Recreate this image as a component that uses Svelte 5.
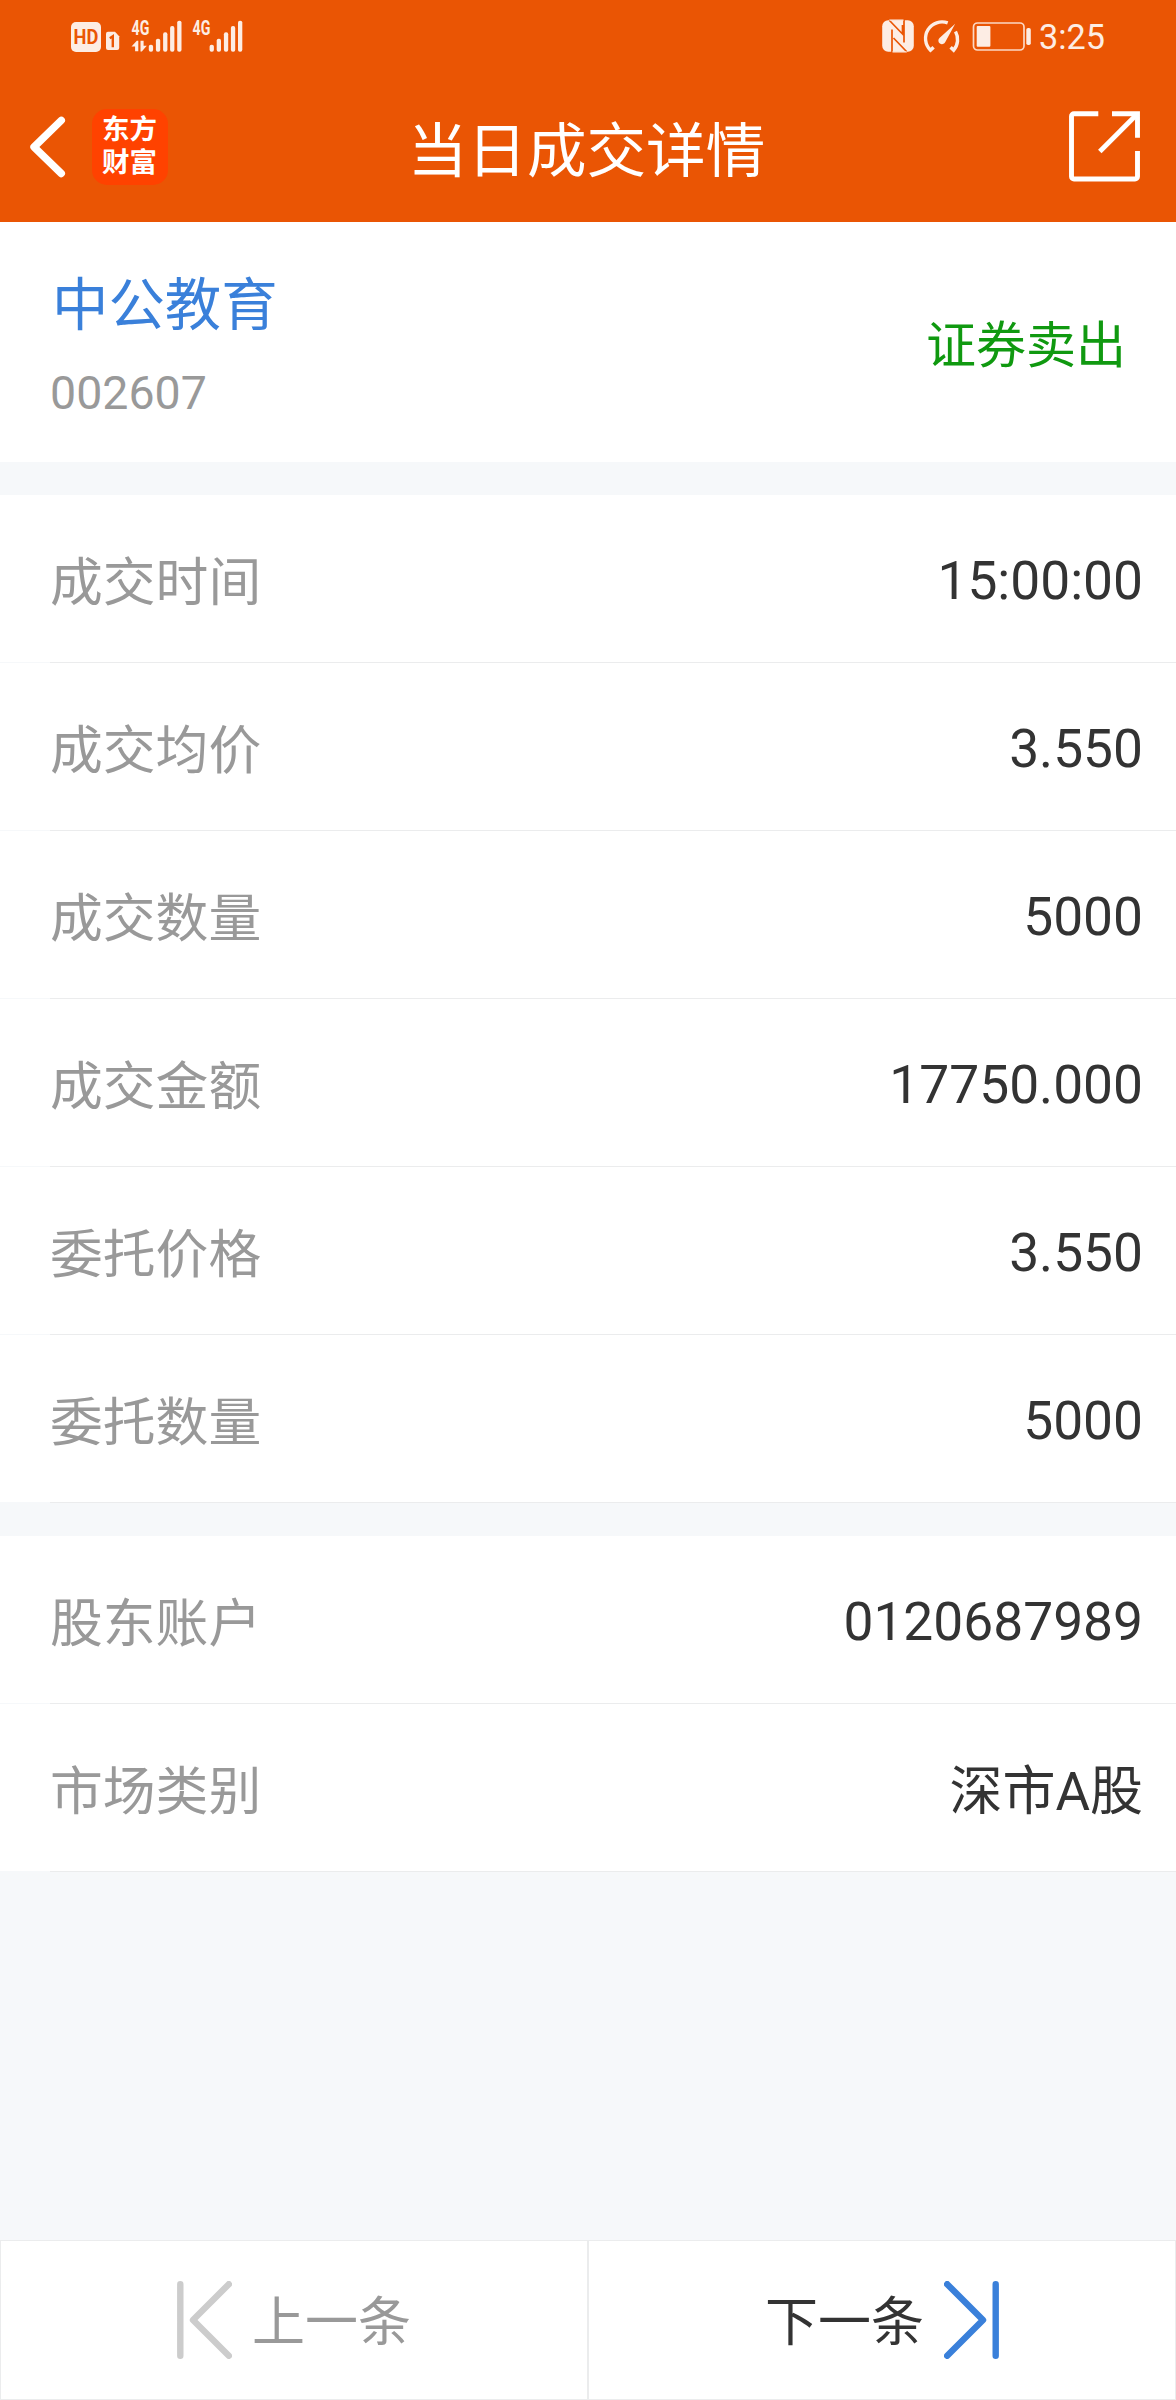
<script lang="ts">
	type Row = { label: string; value: string };

	const stock = { name: "中公教育", code: "002607", side: "证券卖出" };

	const groups: Row[][] = [
		[
			{ label: "成交时间", value: "15:00:00" },
			{ label: "成交均价", value: "3.550" },
			{ label: "成交数量", value: "5000" },
			{ label: "成交金额", value: "17750.000" },
			{ label: "委托价格", value: "3.550" },
			{ label: "委托数量", value: "5000" }
		],
		[
			{ label: "股东账户", value: "0120687989" },
			{ label: "市场类别", value: "深市A股" }
		]
	];

	// Signal bars: x offset and top edge, all share the same bottom
	const bars = [
		{ x: 0, y: 44.8 },
		{ x: 7.1, y: 38.7 },
		{ x: 14.3, y: 32.3 },
		{ x: 21.3, y: 26 },
		{ x: 28.4, y: 20.7 }
	];

	// Values with Chinese text sit a little lower than plain numbers
	const isNumeric = (text: string) => /^[\d.:]+$/.test(text);
</script>

<div class="page">
	<header class="top">
		<div class="status">
			<svg class="signals" width="172" height="72" viewBox="71 0 172 72">
				<rect x="71" y="22" width="30" height="30" rx="5" fill="#fdede4" />
				<text x="73.6" y="43.6" class="hd" textLength="24.8" lengthAdjust="spacingAndGlyphs">HD</text>
				<path d="M108 31.7h7l4.2 4.6v11.7a2 2 0 0 1-2 2h-9.2a2 2 0 0 1-2-2v-14.3a2 2 0 0 1 2-2z" fill="#fdede4" />
				<path d="M109.8 38.2l3-1.9v11" fill="none" stroke="#ea5504" stroke-width="2.4" />
				<text x="131.5" y="34.6" class="net" textLength="17.8" lengthAdjust="spacingAndGlyphs">4G</text>
				<text x="192.5" y="34.6" class="net" textLength="17.8" lengthAdjust="spacingAndGlyphs">4G</text>
				<path d="M138.3 51.3v-10.6h-1.5l-5.3 5.8h3.6v4.8zM140.5 40.7v10.8h1.3l5-5.800h-3.200v-5z" fill="#fdede4" />
				{#each [148.8, 209.6] as start}
					{#each bars as bar}
						<rect x={start + bar.x} y={bar.y} width="4.3" height={51.7 - bar.y} rx="1.9" fill="#fdede4" />
					{/each}
				{/each}
			</svg>
			<div class="status-right">
				<svg width="149" height="72" viewBox="882 0 149 72">
					<rect x="882.2" y="20.2" width="31.6" height="31.6" rx="6" fill="#fdede4" />
					<path d="M892 53V29.500M889.500 20.500L902.500 34V25M904 19v23.500M906.500 51.500L893.500 38" fill="none" stroke="#ea5504" stroke-width="1.7" />
					<path d="M889 19.500h14.500v1.200h-13zM892.500 52.500h14.500l-1-1.200h-13.500z" fill="#fdede4" />
					<path d="M947.7 22.9A16.5 16.5 0 0 0 930.5 50.2L933.6 47.2M955.5 31.500A16.5 16.5 0 0 1 953.7 50.2L950.6 47.2" fill="none" stroke="#fdede4" stroke-width="3.4" />
					<path d="M955.2 23.7L945.3 42a3.6 3.6 0 1 1-5.800-4z" fill="#fdede4" />
					<rect x="973.5" y="23" width="50.5" height="27" rx="4" fill="none" stroke="#fcd8c4" stroke-width="1.7" />
					<rect x="976.7" y="26" width="13.7" height="20.8" rx="1" fill="#fdede4" />
					<rect x="1026.3" y="28" width="4.5" height="17" rx="1.8" fill="#fdede4" />
				</svg>
				<span class="clock">3:25</span>
			</div>
		</div>

		<nav class="bar">
			<div class="bar-left">
				<svg width="36" height="62" viewBox="30 116 36 62">
					<path d="M61.3 120.4L34 147l27.3 26.5" fill="none" stroke="#fff" stroke-width="7.4" stroke-linecap="round" stroke-linejoin="round" />
				</svg>
				<div class="logo"><span>东方</span><span>财富</span></div>
			</div>
			<h1>当日成交详情</h1>
			<svg class="share" width="72" height="72" viewBox="1069 111 72 72">
				<path d="M1098.300 113.700H1074a2.500 2.500 0 0 0-2.500 2.500v60.300a2.500 2.500 0 0 0 2.500 2.500h61a2.500 2.500 0 0 0 2.500-2.500V151M1112 113.700h25.500v24" fill="none" stroke="#fff" stroke-width="4.9" />
				<path d="M1136.500 114.700L1099.800 151.500" fill="none" stroke="#fff" stroke-width="4.9" />
			</svg>
		</nav>
	</header>

	<section class="stock">
		<div class="stock-info">
			<div class="name">{stock.name}</div>
			<div class="code">{stock.code}</div>
		</div>
		<div class="side">{stock.side}</div>
	</section>

	{#each groups as rows}
		<section class="group">
			{#each rows as row}
				<div class="row">
					<span class="label">{row.label}</span>
					<span class="value" class:text={!isNumeric(row.value)}>{row.value}</span>
				</div>
				<div class="line"></div>
			{/each}
		</section>
	{/each}

	<footer class="pager">
		<button class="prev" disabled>
			<svg width="55" height="78" viewBox="0 0 55 78">
				<path d="M3.3 3.2v71.6M51.8 3.2L16 39l35.8 35.8" />
			</svg>
			<span>上一条</span>
		</button>
		<button class="next">
			<span>下一条</span>
			<svg width="55" height="78" viewBox="0 0 55 78">
				<path d="M51.7 3.2v71.6M3.2 3.2L39 39L3.2 74.8" />
			</svg>
		</button>
	</footer>
</div>

<style>
	:global(body) {
		margin: 0;
		background: #f6f8fa;
	}

	.page {
		display: flex;
		flex-direction: column;
		width: 1176px;
		height: 2400px;
		background: #f6f8fa;
		font-family: Roboto, "Noto Sans CJK SC", sans-serif;
		color: #333;
	}

	.top {
		height: 222px;
		background: #ea5504;
		color: #fff;
	}

	/* Status bar */
	.status {
		display: flex;
		justify-content: space-between;
		height: 72px;
		padding: 0 71px;
	}

	.status-right {
		display: flex;
		gap: 8px;
	}

	.clock {
		font-size: 34.2px;
		line-height: 75px;
		color: #fdede4;
	}

	.hd {
		font-size: 21px;
		font-weight: 700;
		fill: #ea5504;
	}

	.net {
		font-size: 19.5px;
		font-weight: 700;
		fill: #fdede4;
	}

	/* Title bar */
	.bar {
		display: grid;
		grid-template-columns: 1fr auto 1fr;
		align-items: center;
		height: 150px;
		padding: 0 35px 0 30px;
		box-sizing: border-box;
	}

	.bar-left {
		display: flex;
		align-items: center;
		gap: 26px;
	}

	.logo {
		display: flex;
		flex-direction: column;
		align-items: center;
		width: 76px;
		height: 76px;
		padding: 5px 1px 0 0;
		box-sizing: border-box;
		border-radius: 15px;
		background: #ff4200;
		font-size: 27.5px;
		font-weight: 700;
		line-height: 32.5px;
	}

	h1 {
		margin: 0;
		padding: 9px 0 0 2px;
		font-size: 59.6px;
		font-weight: 400;
		line-height: 80px;
	}

	.share {
		justify-self: end;
	}

	/* Stock summary */
	.stock {
		display: flex;
		justify-content: space-between;
		height: 240px;
		padding: 44px 50px 0;
		box-sizing: border-box;
		background: #fff;
	}

	.stock-info {
		display: flex;
		flex-direction: column;
		gap: 17px;
	}

	.name {
		padding-left: 2px;
		font-size: 56.4px;
		line-height: 80px;
		color: #3a80da;
	}

	.code {
		font-size: 46.5px;
		line-height: 60px;
		color: #999;
	}

	.side {
		padding-top: 40px;
		font-size: 50px;
		line-height: 80px;
		color: #109910;
	}

	/* Detail rows */
	.group {
		margin-top: 33px;
	}

	.row {
		display: flex;
		justify-content: space-between;
		align-items: center;
		height: 167px;
		padding: 5px 33px 0 50px;
		box-sizing: border-box;
		background: #fff;
		font-size: 53.3px;
		line-height: 80px;
	}

	.label {
		padding-top: 3px;
		font-size: 52.8px;
		color: #999;
	}

	.value.text {
		padding-top: 3px;
		font-size: 53px;
	}

	.line {
		height: 1px;
		margin-left: 50px;
		background: #ebeced;
	}

	/* Previous / next buttons */
	.pager {
		display: grid;
		grid-template-columns: 1fr 1fr;
		height: 160px;
		margin-top: auto;
	}

	button {
		display: flex;
		justify-content: center;
		align-items: center;
		gap: 20px;
		padding: 0;
		border: 1px solid #ebeced;
		background: #fff;
		font-family: inherit;
		font-size: 53px;
		line-height: 80px;
		color: #333;
	}

	button span {
		padding-top: 6px;
	}

	button path {
		fill: none;
		stroke: #3a80da;
		stroke-width: 6.4;
		stroke-linecap: round;
		stroke-linejoin: round;
	}

	.prev {
		color: #999;
	}

	.prev path {
		stroke: #ccc;
	}
</style>
